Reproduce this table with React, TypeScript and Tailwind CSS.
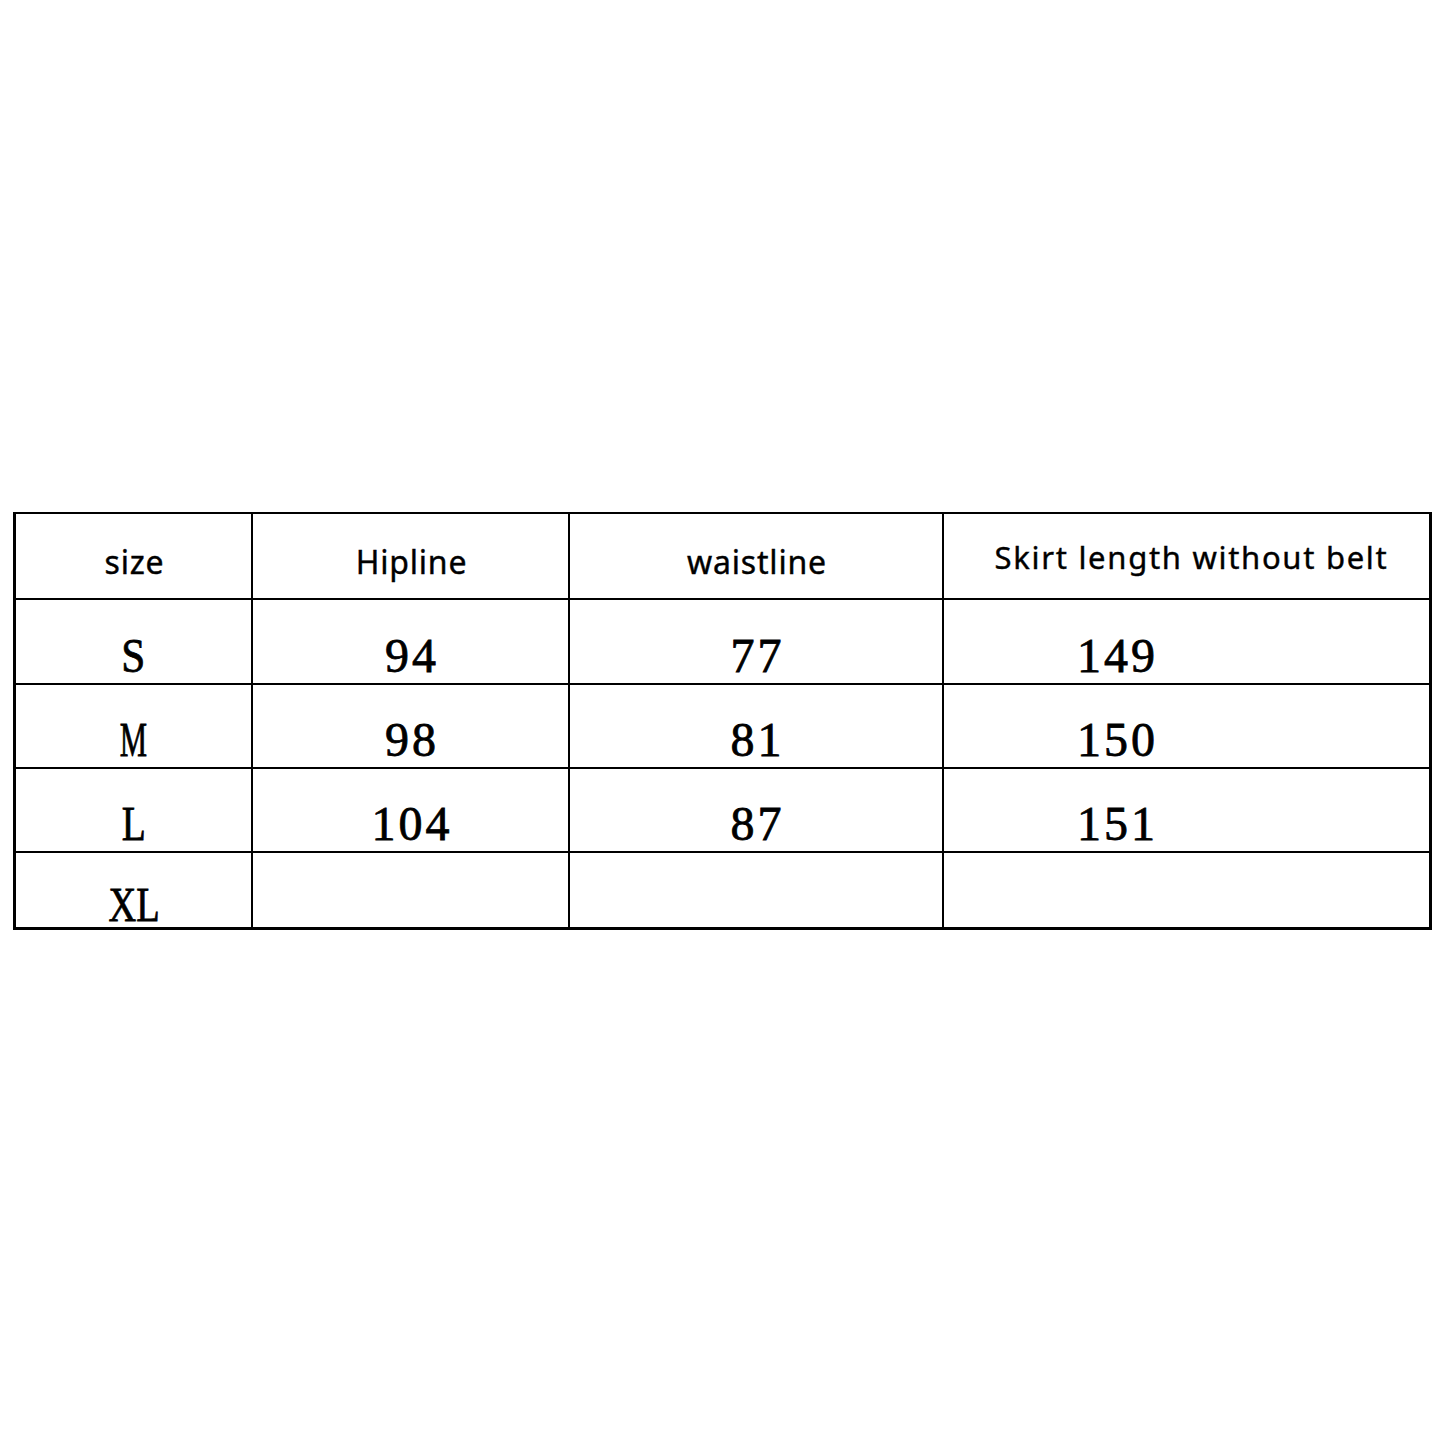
const HEAD = ["size", "Hipline", "waistline", "Skirt length without belt"];

const ROWS = [
  { size: "S", fit: "scale-x-90", hip: "94", waist: "77", length: "149" },
  { size: "M", fit: "scale-x-[0.64]", hip: "98", waist: "81", length: "150" },
  { size: "L", fit: "scale-x-[0.82]", hip: "104", waist: "87", length: "151" },
  { size: "XL", fit: "scale-x-[0.8]", hip: "", waist: "", length: "" },
];

const sans = "font-['Noto_Sans','Liberation_Sans',Arial,sans-serif] [-webkit-text-stroke:0.4px_black]";
const serif = "font-['Liberation_Serif','Times_New_Roman',serif] [-webkit-text-stroke:0.8px_black]";

export default function App() {
  return (
    <div className="min-h-[1445px] w-full bg-white pt-[512px] text-black">
      <div className="ml-[13px] w-[1419px] border-t-2 border-r-[3px] border-b-[3px] border-l-[3px] border-black">
        {/* header */}
        <div className="grid h-[86px] grid-cols-[237px_317px_374px_1fr] border-b-2 border-black">
          {HEAD.map((h, i) => (
            <div
              key={h}
              className={
                "flex items-center justify-center leading-none " +
                (i < 3 ? "border-r-2 border-black pt-[12px] pl-[2px] text-[32px] tracking-[0.8px] " : "pt-[2px] pl-[10px] text-[31px] tracking-[1.7px] ") +
                sans
              }
            >
              {h}
            </div>
          ))}
        </div>

        {ROWS.map((r, idx) => (
          <div
            key={r.size}
            className={
              "grid grid-cols-[237px_317px_374px_1fr] " +
              (idx === 0 ? "h-[85px] border-b-2 border-black " : "") +
              (idx === 1 || idx === 2 ? "h-[84px] border-b-2 border-black " : "") +
              (idx === 3 ? "h-[74px] " : "") +
              serif +
              " text-[48px] leading-none"
            }
          >
            <div className="flex items-center justify-center border-r-2 border-black pt-[28px]">
              <span className={"inline-block " + r.fit}>{r.size}</span>
            </div>
            <div className="flex items-center justify-center border-r-2 border-black pt-[28px] pl-[3px] tracking-[3px]">
              {r.hip}
            </div>
            <div className="flex items-center justify-center border-r-2 border-black pt-[28px] pl-[3px] tracking-[3px]">
              {r.waist}
            </div>
            <div className="flex items-center pl-[133px] pt-[28px] tracking-[3px]">{r.length}</div>
          </div>
        ))}
      </div>
    </div>
  );
}
